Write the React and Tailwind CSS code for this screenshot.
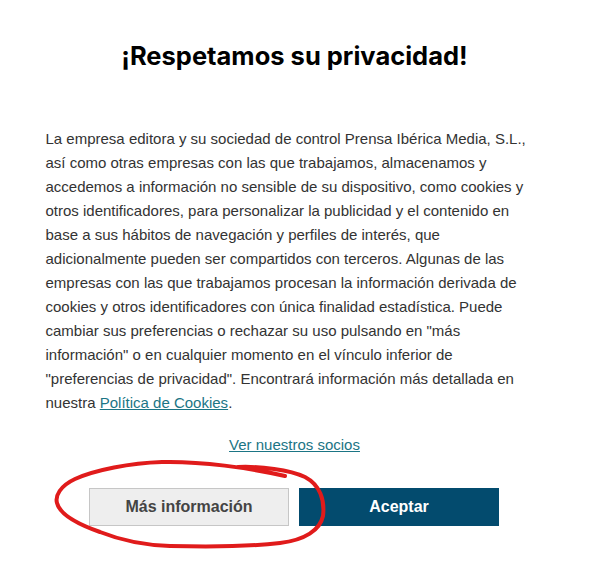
export default function App() {
  return (
    <div className="relative w-[589px] h-[573px] bg-white overflow-hidden" style={{ fontFamily: '"Liberation Sans", Arial, sans-serif' }}>
      <h1 className="pt-[40px] text-center text-[25.5px] leading-8 font-bold text-black" style={{ fontFamily: 'Inter, "Noto Sans", sans-serif' }}>
        ¡Respetamos su privacidad!
      </h1>

      <p className="mt-[55px] mx-auto w-[500px] pl-px text-[15px] leading-6 text-[#333333]">
        La empresa editora y su sociedad de control Prensa Ibérica Media, S.L., así como otras empresas con las que trabajamos, almacenamos y accedemos a información no sensible de su dispositivo, como cookies y otros identificadores, para personalizar la publicidad y el contenido en base a sus hábitos de navegación y perfiles de interés, que adicionalmente pueden ser compartidos con terceros. Algunas de las empresas con las que trabajamos procesan la información derivada de cookies y otros identificadores con única finalidad estadística. Puede cambiar sus preferencias o rechazar su uso pulsando en "más información" o en cualquier momento en el vínculo inferior de "preferencias de privacidad". Encontrará información más detallada en nuestra{' '}
        <a href="#" className="text-[#1b7585] underline">Política de Cookies</a>.
      </p>

      <div className="mt-[18px] text-center text-[15px] leading-6">
        <a href="#" className="text-[#1b7585] underline">Ver nuestros socios</a>
      </div>

      <div className="mt-[31px] pr-px flex justify-center gap-[10px]">
        <button className="w-[200px] h-[38px] bg-[#eeeeee] border border-[#c6c6c6] text-[#444444] text-[16px] font-bold">
          Más información
        </button>
        <button className="w-[200px] h-[38px] bg-[#034b6e] text-white text-[16px] font-bold">
          Aceptar
        </button>
      </div>

      {/* red hand-drawn annotation */}
      <svg className="absolute inset-0 pointer-events-none" width="589" height="573" viewBox="0 0 589 573" fill="none">
        <path
          d="M285 476 C250 468 200 461 162 462 C130 463 95 470 75 479 C60 486 55 496 57 503 C60 515 80 525 100 532 C120 540 140 545 170 546 C210 547 255 546 280 543 C305 540 320 530 323 516 C325 500 320 485 305 477 C290 470 260 466 238 467"
          stroke="#e01b1b"
          strokeWidth="4"
          strokeLinecap="round"
          strokeLinejoin="round"
        />
      </svg>
    </div>
  )
}
